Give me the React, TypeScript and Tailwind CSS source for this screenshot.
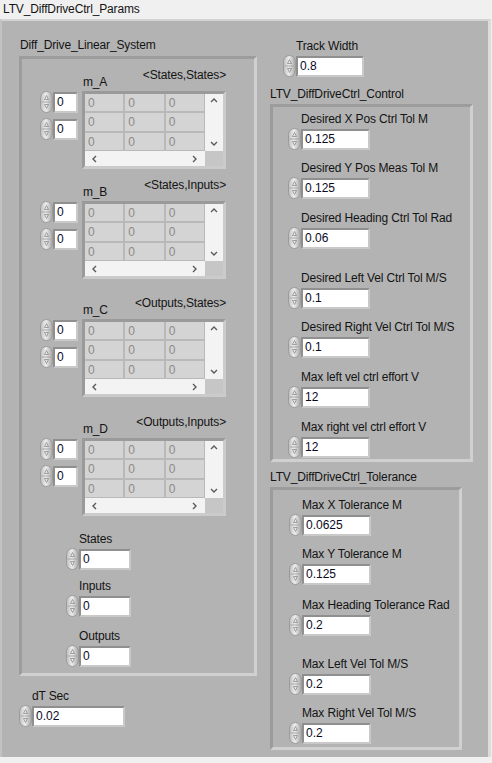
const txt = "text-[12px] leading-[16px] text-[#141414] whitespace-nowrap tracking-[-0.15px]";

function Spinner() {
  return (
    <svg width="13" height="22" viewBox="0 0 13 22" className="shrink-0">
      <defs>
        <linearGradient id="spin" x1="0" x2="1" y1="0" y2="0">
          <stop offset="0" stopColor="#bdbdbd" />
          <stop offset="0.45" stopColor="#ededed" />
          <stop offset="1" stopColor="#a4a4a4" />
        </linearGradient>
      </defs>
      <rect x="0.5" y="0.5" width="12" height="21" rx="6" fill="url(#spin)" stroke="#9b9b9b" />
      <line x1="1.5" y1="11" x2="11.5" y2="11" stroke="#a8a8a8" />
      <path d="M4.5 8.5 L6.5 4.5 L8.5 8.5 Z" fill="none" stroke="#8d8d8d" strokeWidth="0.8" />
      <path d="M4.5 13.5 L6.5 17.5 L8.5 13.5 Z" fill="none" stroke="#8d8d8d" strokeWidth="0.8" />
    </svg>
  );
}

function NumBox({ value, w }: { value: string; w: string }) {
  return (
    <div
      className={`${w} h-[21px] border-2 border-t-[#8f8f8f] border-l-[#8f8f8f] border-r-[#c9c9c9] border-b-[#c9c9c9] bg-white pl-[2px] text-[12px] leading-[17px] text-[#0a0a1e]`}
    >
      {value}
    </div>
  );
}

function NumCtrl({ label, value, w, className = "" }: { label: string; value: string; w: string; className?: string }) {
  return (
    <div className={`flex flex-col ${className}`}>
      <div className={`${txt} pl-[13px] mb-[1px]`}>{label}</div>
      <div className="flex items-center">
        <Spinner />
        <NumBox value={value} w={w} />
      </div>
    </div>
  );
}

function Chevron({ dir }: { dir: "up" | "down" | "left" | "right" }) {
  const d = {
    up: "M1 5 L4 2 L7 5",
    down: "M1 2 L4 5 L7 2",
    left: "M5 1 L2 4 L5 7",
    right: "M2 1 L5 4 L2 7",
  }[dir];
  return (
    <svg width="8" height="8" viewBox="0 0 8 8">
      <path d={d} fill="none" stroke="#5a5a5a" strokeWidth="1.4" />
    </svg>
  );
}

function ArrayCtrl({ name, dims, className = "" }: { name: string; dims: string; className?: string }) {
  const cells = Array.from({ length: 9 });
  return (
    <div className={`flex flex-col ${className}`}>
      <div className="flex h-[24px] pl-[43px] w-[186px]">
        <span className={`${txt} mt-[7px]`}>{name}</span>
        <span className={`${txt} ml-auto`}>{dims}</span>
      </div>
      <div className="flex">
        <div className="flex flex-col gap-[5px] mr-[4px]">
          {[0, 1].map((i) => (
            <div key={i} className="flex items-center">
              <Spinner />
              <NumBox value="0" w="w-[25px]" />
            </div>
          ))}
        </div>
        <div className="w-[144px] h-[78px] border-[3px] border-t-[#9a9a9a] border-l-[#9a9a9a] border-r-[#cbcbcb] border-b-[#cbcbcb] grid grid-cols-[120px_18px] grid-rows-[57px_15px]">
          <div className="grid grid-cols-3 grid-rows-3 gap-[2px] bg-[#b9b9b9] pr-[1px] pb-[1px]">
            {cells.map((_, i) => (
              <div key={i} className="bg-[#d4d4d4] pl-[3px] text-[12px] leading-[18px] text-[#8e8a86]">
                0
              </div>
            ))}
          </div>
          <div className="bg-[#f3f3f3] flex flex-col justify-between items-center py-[3px]">
            <Chevron dir="up" />
            <Chevron dir="down" />
          </div>
          <div className="bg-[#f3f3f3] flex justify-between items-center px-[6px]">
            <Chevron dir="left" />
            <Chevron dir="right" />
          </div>
          <div className="bg-[#c6c6c6]" />
        </div>
      </div>
    </div>
  );
}

const frame = "border-[3px] border-t-[#9c9c9c] border-l-[#9c9c9c] border-r-[#d0d0d0] border-b-[#d0d0d0]";

export default function App() {
  return (
    <div className="w-[492px] h-[763px] bg-[#f0f0f0] overflow-hidden font-['Liberation_Sans',Arial,sans-serif]">
      <div className={`${txt} pl-[3px] pt-[1px] h-[19px]`}>LTV_DiffDriveCtrl_Params</div>
      <div className="w-[491px] h-[738px] bg-[#b3b3b3] border-t-2 border-l-2 border-r-[3px] border-t-[#d3d3d3] border-l-[#c2c2c2] border-r-[#dcdcdc] flex pt-[16px]">
        {/* left column */}
        <div className="flex flex-col ml-[17px] w-[238px]">
          <div className={`${txt} pl-[1px] mb-[3px]`}>Diff_Drive_Linear_System</div>
          <div className={`${frame} h-[620px] flex flex-col pt-[8px] pl-[18px]`}>
            <ArrayCtrl name="m_A" dims="<States,States>" />
            <ArrayCtrl name="m_B" dims="<States,Inputs>" className="mt-[8px]" />
            <ArrayCtrl name="m_C" dims="<Outputs,States>" className="mt-[16px]" />
            <ArrayCtrl name="m_D" dims="<Outputs,Inputs>" className="mt-[17px]" />
            <div className="flex flex-col pl-[26px] mt-[15px]">
              <NumCtrl label="States" value="0" w="w-[52px]" />
              <NumCtrl label="Inputs" value="0" w="w-[52px]" className="mt-[8px]" />
              <NumCtrl label="Outputs" value="0" w="w-[52px]" className="mt-[11px]" />
            </div>
          </div>
          <NumCtrl label="dT Sec" value="0.02" w="w-[93px]" className="mt-[12px]" />
        </div>

        {/* right column */}
        <div className="flex flex-col ml-[13px]">
          <NumCtrl label="Track Width" value="0.8" w="w-[68px]" className="ml-[13px] mt-[1px]" />
          <div className={`${txt} mt-[9px] mb-[2px]`}>LTV_DiffDriveCtrl_Control</div>
          <div className={`${frame} w-[203px] h-[358px] flex flex-col pt-[4px] pl-[15px]`}>
            <NumCtrl label="Desired X Pos Ctrl Tol M" value="0.125" w="w-[69px]" />
            <NumCtrl label="Desired Y Pos Meas Tol M" value="0.125" w="w-[69px]" className="mt-[10px]" />
            <NumCtrl label="Desired Heading Ctrl Tol Rad" value="0.06" w="w-[69px]" className="mt-[11px]" />
            <NumCtrl label="Desired Left Vel Ctrl Tol M/S" value="0.1" w="w-[69px]" className="mt-[21px]" />
            <NumCtrl label="Desired Right Vel Ctrl Tol M/S" value="0.1" w="w-[69px]" className="mt-[10px]" />
            <NumCtrl label="Max left vel ctrl effort V" value="12" w="w-[69px]" className="mt-[11px]" />
            <NumCtrl label="Max right vel ctrl effort V" value="12" w="w-[69px]" className="mt-[11px]" />
          </div>
          <div className={`${txt} mt-[7px] mb-[2px]`}>LTV_DiffDriveCtrl_Tolerance</div>
          <div className={`${frame} w-[192px] h-[263px] flex flex-col pt-[7px] pl-[16px]`}>
            <NumCtrl label="Max X Tolerance M" value="0.0625" w="w-[69px]" />
            <NumCtrl label="Max Y Tolerance M" value="0.125" w="w-[69px]" className="mt-[10px]" />
            <NumCtrl label="Max Heading Tolerance Rad" value="0.2" w="w-[69px]" className="mt-[12px]" />
            <NumCtrl label="Max Left Vel Tol M/S" value="0.2" w="w-[69px]" className="mt-[20px]" />
            <NumCtrl label="Max Right Vel Tol M/S" value="0.2" w="w-[69px]" className="mt-[10px]" />
          </div>
        </div>
      </div>
    </div>
  );
}
